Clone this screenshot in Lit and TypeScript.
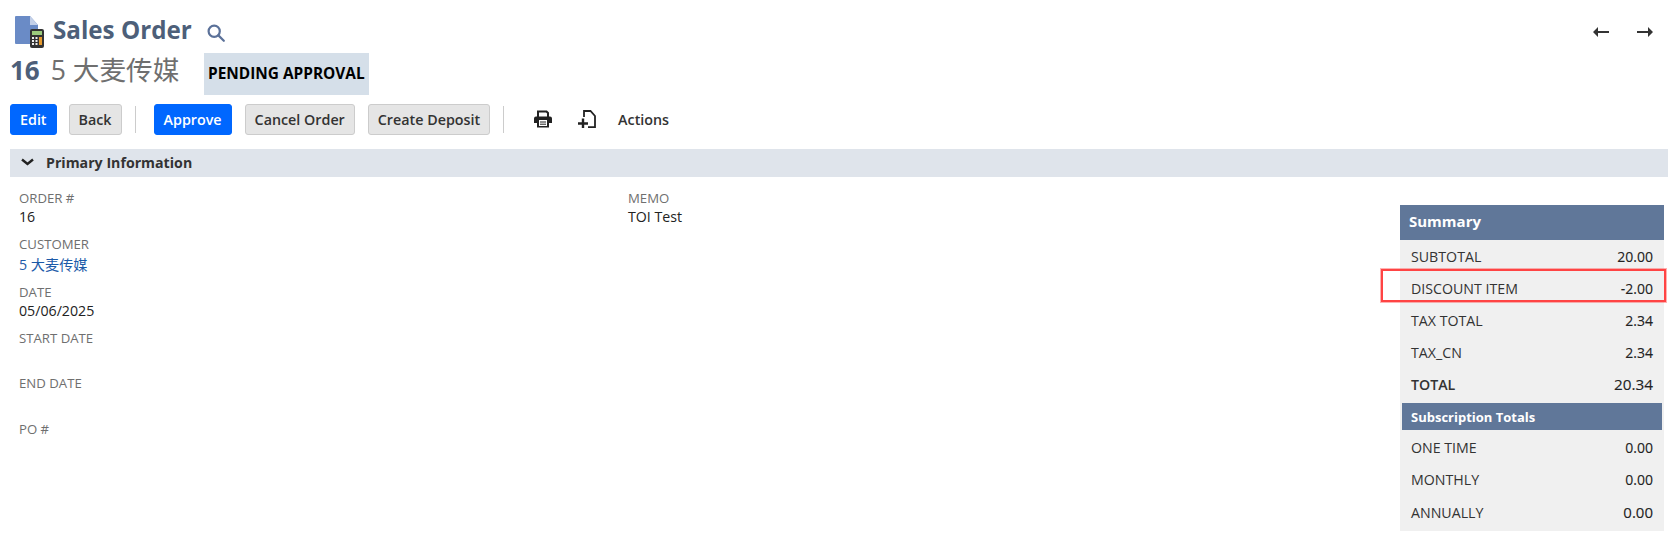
import { LitElement, html, css } from "lit";
import { customElement } from "lit/decorators.js";

const fields = [
  { label: "ORDER #", value: "16" },
  { label: "CUSTOMER", value: "5 大麦传媒", link: true },
  { label: "DATE", value: "05/06/2025" },
  { label: "START DATE", value: "" },
  { label: "END DATE", value: "" },
  { label: "PO #", value: "" },
];

const summaryRows = [
  { label: "SUBTOTAL", value: "20.00" },
  { label: "DISCOUNT ITEM", value: "-2.00" },
  { label: "TAX TOTAL", value: "2.34" },
  { label: "TAX_CN", value: "2.34" },
];

const subscriptionRows = [
  { label: "ONE TIME", value: "0.00" },
  { label: "MONTHLY", value: "0.00" },
  { label: "ANNUALLY", value: "0.00", big: true },
];

@customElement("app-root")
export class AppRoot extends LitElement {
  static styles = css`
    :host {
      display: block;
      width: 1668px;
      height: 537px;
      overflow: hidden;
      background: #fff;
      font-family: "Open Sans", "Noto Sans CJK SC", sans-serif;
      color: #222;
      position: relative;
    }

    .title-row {
      height: 52px;
      padding: 16px 15px 0 15px;
      box-sizing: border-box;
      display: flex;
      align-items: flex-start;
    }

    .doc-icon {
      width: 29px;
      height: 32px;
      flex: none;
    }

    .title {
      font-size: 24.2px;
      font-weight: 700;
      line-height: 28px;
      color: #4d5f79;
      margin-left: 9px;
    }

    .search {
      width: 18px;
      height: 18px;
      margin: 8px 0 0 15px;
    }

    .pager {
      margin-left: auto;
      display: flex;
      gap: 28px;
      padding-top: 11px;
    }

    .pager svg {
      width: 16px;
      height: 10px;
      display: block;
    }

    .record-row {
      height: 44px;
      margin-top: 1px;
      padding-left: 10px;
      display: flex;
      align-items: flex-start;
    }

    .record {
      font-size: 26px;
      line-height: 34px;
      color: #6f6f6f;
      display: flex;
      gap: 11px;
      width: 194px;
    }

    .record span {
      font-size: 26.6px;
    }

    .record b {
      color: #4d5f79;
    }

    .badge {
      height: 42px;
      box-sizing: border-box;
      padding: 0 4px 2px;
      display: flex;
      align-items: center;
      background: #d5dfe9;
      color: #000;
      font-size: 15.4px;
      font-weight: 700;
    }

    .toolbar {
      height: 32px;
      margin-top: 6px;
      padding-left: 10px;
      display: flex;
      align-items: center;
    }

    .btn {
      height: 31px;
      box-sizing: border-box;
      padding: 0 9px;
      border-radius: 3px;
      border: 1px solid #ccc;
      background: #e5e5e5;
      color: #333;
      font-family: inherit;
      font-size: 14.3px;
      font-weight: 600;
      display: flex;
      align-items: center;
      margin-right: 13px;
    }

    .btn.primary {
      background: #0067ff;
      border-color: #0067ff;
      color: #fff;
    }

    .btn.edit {
      margin-right: 12px;
    }

    .sep {
      width: 1px;
      height: 27px;
      background: #ccc;
      margin-right: 18px;
    }

    .tool-icon {
      width: 18px;
      height: 18px;
      display: block;
    }

    .print {
      margin: 0 26px 0 12px;
    }

    .actions {
      margin-left: 22px;
      font-size: 14.3px;
      font-weight: 600;
      color: #333;
    }

    .section {
      height: 28px;
      box-sizing: border-box;
      margin: 14px 0 0 10px;
      padding: 0 0 2px 11px;
      background: #dfe4eb;
      display: flex;
      align-items: center;
      gap: 12px;
      font-size: 14.2px;
      font-weight: 700;
      color: #333;
    }

    .section svg {
      width: 13px;
      height: 8px;
    }

    .body {
      display: flex;
      align-items: flex-start;
    }

    .col {
      padding: 12px 0 0 19px;
      box-sizing: border-box;
    }

    .col.first {
      width: 609px;
    }

    .field {
      height: 46px;
    }

    .field.tall {
      height: 45px;
    }

    .field.cjk {
      height: 48px;
    }

    .field.cjk .value {
      padding-top: 2px;
    }

    .field.end-date {
      height: 46px;
    }

    .label {
      font-size: 13.2px;
      line-height: 18px;
      color: #6f6f6f;
    }

    .value {
      font-size: 14.2px;
      line-height: 19px;
      color: #222;
    }

    .value.link {
      color: #1b5aa8;
    }

    .summary {
      width: 264px;
      margin: 28px 4px 0 auto;
      background: #f0f0f0;
      padding-bottom: 3px;
    }

    .summary-head {
      height: 35px;
      box-sizing: border-box;
      padding: 0 0 3px 9px;
      display: flex;
      align-items: center;
      background: #607799;
      color: #fff;
      font-size: 15px;
      font-weight: 700;
    }

    .row {
      height: 32px;
      padding: 0 11px;
      display: flex;
      justify-content: space-between;
      align-items: center;
      font-size: 14.2px;
      color: #333;
    }

    .row .amount {
      font-size: 14px;
      font-weight: 400;
      color: #222;
      -webkit-text-stroke: 0.12px #222;
    }

    .row.total .name {
      font-weight: 600;
    }

    .row.total .amount {
      font-size: 15.3px;
    }

    .row.big {
      padding-top: 1px;
    }

    .row.big .amount {
      font-size: 15px;
    }

    .sub-head {
      height: 27px;
      margin: 3px 2px 1px;
      padding-left: 9px;
      display: flex;
      align-items: center;
      background: #607799;
      color: #fff;
      font-size: 13px;
      font-weight: 700;
    }

    .highlight {
      position: absolute;
      left: 1381px;
      top: 269px;
      width: 281px;
      height: 29px;
      border: 2px solid #f44;
      outline: 1px solid rgba(255, 85, 85, 0.45);
      pointer-events: none;
    }
  `;

  renderRow(r: { label: string; value: string; big?: boolean }, cls = "") {
    return html`<div class="row ${cls} ${r.big ? "big" : ""}">
      <span class="name">${r.label}</span><span class="amount">${r.value}</span>
    </div>`;
  }

  render() {
    return html`
      <div class="title-row">
        <svg class="doc-icon" viewBox="0 0 29 32">
          <path d="M1 0h14l8 9v19H1a1 1 0 0 1-1-1V1a1 1 0 0 1 1-1z" fill="#6a8bc6" />
          <path d="M15 0l8 9h-8z" fill="#c3d0e8" />
          <rect x="15" y="13" width="14" height="19" rx="2" fill="#333" />
          <rect x="17" y="15" width="10" height="4" fill="#9ccb7c" />
          <path d="M17 21h2v2h-2zM20.5 21h2v2h-2zM17 24h2v2h-2zM20.5 24h2v2h-2zM17 27h2v2h-2zM20.5 27h2v2h-2z" fill="#eee" />
          <rect x="24" y="21" width="3" height="8" fill="#e69a2e" />
        </svg>
        <div class="title">Sales Order</div>
        <svg class="search" viewBox="0 0 18 18" fill="none" stroke="#5b7199" stroke-width="2.2">
          <circle cx="7.2" cy="7.2" r="5.6" />
          <path d="M11.4 11.4l5.4 5.4" stroke-linecap="round" />
        </svg>
        <div class="pager">
          <svg viewBox="0 0 16 10"><path d="M0 5l5-5v4h11v2H5v4z" fill="#333" /></svg>
          <svg viewBox="0 0 16 10"><path d="M16 5l-5-5v4H0v2h11v4z" fill="#333" /></svg>
        </div>
      </div>

      <div class="record-row">
        <div class="record"><b>16</b><span>5 大麦传媒</span></div>
        <div class="badge">PENDING APPROVAL</div>
      </div>

      <div class="toolbar">
        <div class="btn primary edit">Edit</div>
        <div class="btn">Back</div>
        <div class="sep"></div>
        <div class="btn primary">Approve</div>
        <div class="btn">Cancel Order</div>
        <div class="btn">Create Deposit</div>
        <div class="sep"></div>
        <svg class="tool-icon print" viewBox="0 0 18 18">
          <path d="M4 7V1.500h8.500L14 3v4" fill="none" stroke="#222" stroke-width="2" />
          <path d="M2 6.500h14a2 2 0 0 1 2 2V13h-3v4.500H3V13H0V8.500a2 2 0 0 1 2-2z" fill="#222" />
          <rect x="5" y="10" width="8" height="6" fill="#fff" />
          <path d="M6 12h6M6 14.200h6" stroke="#222" stroke-width="1" />
        </svg>
        <svg class="tool-icon" viewBox="0 0 18 18" fill="none" stroke="#222">
          <path d="M6 7V1h6.500L17 6v11.200h-7" stroke-width="1.800" />
          <path d="M0 13.500h10M5 8.500v9.500" stroke-width="2.400" />
        </svg>
        <div class="actions">Actions</div>
      </div>

      <div class="section">
        <svg viewBox="0 0 13 8" fill="none" stroke="#222" stroke-width="2.400">
          <path d="M1 1.500l5.500 4.500 5.500-4.500" />
        </svg>
        Primary Information
      </div>

      <div class="body">
        <div class="col first">
          ${fields.map(
            (f) => html`<div class="field ${f.value ? "" : "tall"} ${f.link ? "cjk" : ""} ${f.label === "END DATE" ? "end-date" : ""}">
              <div class="label">${f.label}</div>
              <div class="value ${f.link ? "link" : ""}">${f.value}</div>
            </div>`
          )}
        </div>
        <div class="col">
          <div class="label">MEMO</div>
          <div class="value">TOI Test</div>
        </div>
        <div class="summary">
          <div class="summary-head">Summary</div>
          ${summaryRows.map((r) => this.renderRow(r))}
          ${this.renderRow({ label: "TOTAL", value: "20.34" }, "total")}
          <div class="sub-head">Subscription Totals</div>
          ${subscriptionRows.map((r) => this.renderRow(r))}
        </div>
      </div>
      <div class="highlight"></div>
    `;
  }
}
